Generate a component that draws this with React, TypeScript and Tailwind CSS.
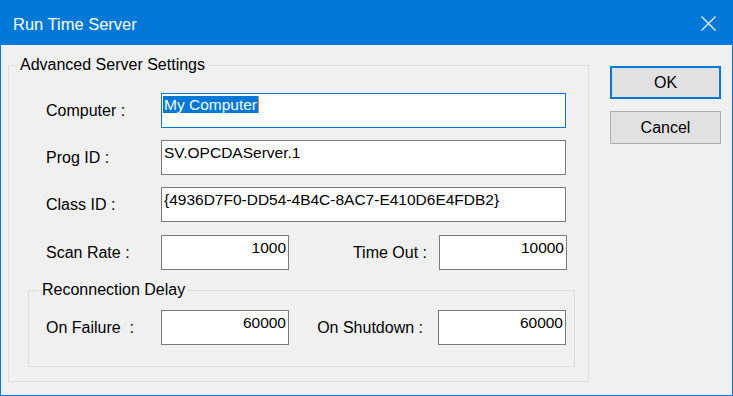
import React from "react";

const Field = ({
  value,
  width,
  right,
}: {
  value: string;
  width: string;
  right?: boolean;
}) => (
  <div
    className={`${width} h-[35px] border border-[#7a7a7a] bg-white px-[2px] pt-[3px] text-[15.5px] leading-[17px] whitespace-nowrap ${
      right ? "text-right" : "text-left"
    }`}
  >
    {value}
  </div>
);

const App = () => {
  return (
    <div className="w-[733px] h-[396px] border border-[#0078d7] bg-[#f0f0f0] flex flex-col overflow-hidden font-['Liberation_Sans',Arial,sans-serif] text-black">
      {/* title bar */}
      <div className="h-[44px] bg-[#0078d7] flex items-center justify-between pl-[12px] pr-[16px] pt-[2px]">
        <span className="text-white text-[16.5px] leading-[18px]">Run Time Server</span>
        <svg width="15" height="15" viewBox="0 0 15 15" className="-mt-[2px]">
          <path d="M0.5 0.5 L14.5 14.5 M14.5 0.5 L0.5 14.5" stroke="white" strokeWidth="1.1" />
        </svg>
      </div>

      <div className="flex pl-[7px] pt-[11px]">
        <fieldset className="w-[581px] border border-[#dcdcdc] pb-[14px]">
          <legend className="ml-[8px] px-[3px] text-[16px] leading-[18px]">Advanced Server Settings</legend>

          <div className="mt-[19px] pl-[37px] pr-[21px] flex flex-col gap-[12px] text-[16px]">
            <div className="flex items-center">
              <span className="w-[115px]">Computer :</span>
              <div className="w-[405px] h-[35px] border border-[#0078d7] bg-white px-[1px] pt-[2px] text-[15.5px] leading-[17px] flex items-start">
                <span className="bg-[#0078d7] text-white px-[1px]">My Computer</span>
                <span className="w-[1px] h-[17px] bg-[#ff8c00]" />
              </div>
            </div>
            <div className="flex items-center">
              <span className="w-[115px]">Prog ID :</span>
              <Field value="SV.OPCDAServer.1" width="w-[405px]" />
            </div>
            <div className="flex items-center">
              <span className="w-[115px]">Class ID :</span>
              <Field value="{4936D7F0-DD54-4B4C-8AC7-E410D6E4FDB2}" width="w-[405px]" />
            </div>
            <div className="flex items-center mt-[1px]">
              <span className="w-[115px]">Scan Rate :</span>
              <Field value="1000" width="w-[128px]" right />
              <span className="flex-1 text-right pr-[12px]">Time Out :</span>
              <Field value="10000" width="w-[128px]" right />
            </div>
          </div>

          <fieldset className="mt-[11px] ml-[19px] mr-[13px] border border-[#dcdcdc] pb-[21px]">
            <legend className="ml-[10px] px-[3px] text-[16px] leading-[18px]">Reconnection Delay</legend>
            <div className="mt-[11px] pl-[17px] pr-[8px] flex items-center text-[16px]">
              <span className="w-[115px] whitespace-pre">On Failure  :</span>
              <Field value="60000" width="w-[128px]" right />
              <span className="flex-1 text-right pr-[15px]">On Shutdown :</span>
              <Field value="60000" width="w-[128px]" right />
            </div>
          </fieldset>
        </fieldset>

        <div className="ml-[21px] mt-[10px] w-[111px] flex flex-col gap-[12px] text-[16px]">
          <button className="h-[33px] border-2 border-[#0078d7] bg-[#e1e1e1]">OK</button>
          <button className="h-[33px] border border-[#adadad] bg-[#e1e1e1]">Cancel</button>
        </div>
      </div>
    </div>
  );
};

export default App;
